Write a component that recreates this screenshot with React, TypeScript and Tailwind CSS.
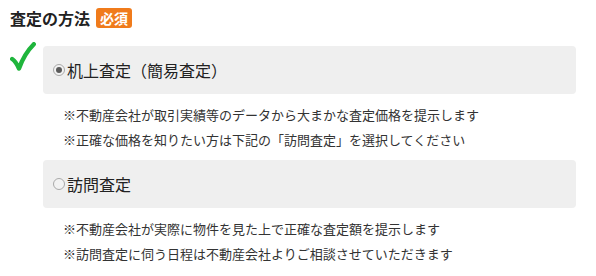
import React from 'react';

const font = { fontFamily: '"Noto Sans CJK JP", "Noto Sans", sans-serif' };

function Radio({ checked }: { checked: boolean }) {
  return (
    <span className="inline-flex h-[12px] w-[12px] shrink-0 items-center justify-center rounded-full border border-[#a9a9a9] bg-[#f2f2f2]">
      {checked && <span className="h-[6px] w-[6px] rounded-full bg-[#5a5a5a]" />}
    </span>
  );
}

const options = [
  {
    label: '机上査定（簡易査定）',
    checked: true,
    notes: [
      '※不動産会社が取引実績等のデータから大まかな査定価格を提示します',
      '※正確な価格を知りたい方は下記の「訪問査定」を選択してください',
    ],
  },
  {
    label: '訪問査定',
    checked: false,
    notes: [
      '※不動産会社が実際に物件を見た上で正確な査定額を提示します',
      '※訪問査定に伺う日程は不動産会社よりご相談させていただきます',
    ],
  },
];

export default function App() {
  return (
    <div className="h-[276px] w-[596px] bg-white pl-[10px] pr-[20px] pt-[8px] text-[#333]" style={font}>
      <div className="flex h-[20px] items-center">
        <h2 className="text-[16px] font-bold leading-none text-[#222]">査定の方法</h2>
        <span className="ml-[6px] flex h-[20px] items-center rounded-[3px] bg-[#f07b1b] px-[4px] text-[14px] font-bold leading-none text-white">
          必須
        </span>
      </div>

      <div className="mt-[18px] flex">
        <div className="w-[33px] shrink-0">
          <svg width="26" height="30" viewBox="0 0 26 30" className="-mt-[4px]">
            <path d="M2.2 17 C4.5 18.5 7 22 9 26.5 C12 18 17 9 23.8 2.2" fill="none" stroke="#1fb53c" strokeWidth="4.4" strokeLinecap="round" strokeLinejoin="round" />
          </svg>
        </div>
        <div className="flex-1">
          {options.map((o) => (
            <div key={o.label}>
              <label className="flex h-[48px] items-center gap-[2px] rounded-[4px] bg-[#efefef] pl-[10px] text-[16px] text-[#222]">
                <Radio checked={o.checked} />
                <span>{o.label}</span>
              </label>
              <div className="pb-[8px] pl-[20px] pt-[8px] text-[13px] leading-[25px]">
                {o.notes.map((n) => (
                  <p key={n}>{n}</p>
                ))}
              </div>
            </div>
          ))}
        </div>
      </div>
    </div>
  );
}
